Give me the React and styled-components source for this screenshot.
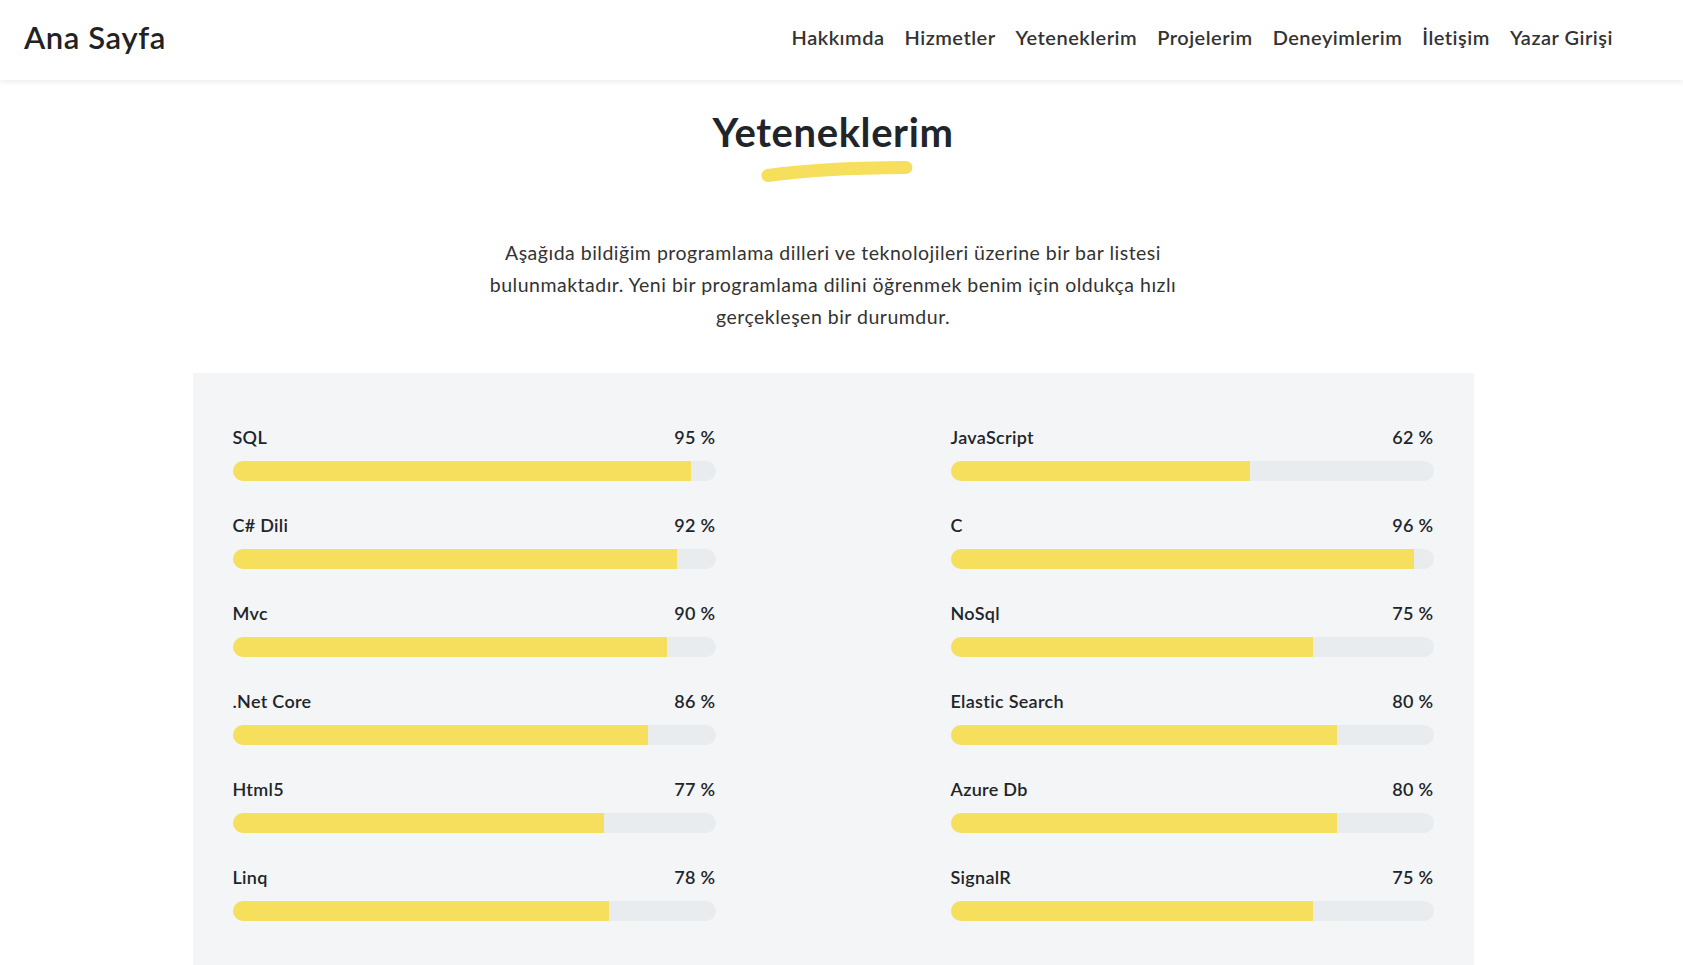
import React from "react";
import styled, { createGlobalStyle } from "styled-components";

const GlobalStyle = createGlobalStyle`
  html, body { margin: 0; padding: 0; background: #ffffff; }
  body {
    font-family: Lato, "Noto Sans", sans-serif;
    color: #212529;
    overflow: hidden;
  }
  * { box-sizing: border-box; }
`;

const Header = styled.header`
  height: 80px;
  display: flex;
  align-items: center;
  justify-content: space-between;
  padding: 0 70px 6px 24px;
  background: #fff;
  box-shadow: 0 2px 6px rgba(0, 0, 0, 0.08);
  position: relative;
  z-index: 1;
`;

const Brand = styled.a`
  font-size: 31px;
  font-weight: 600;
  color: #222;
  text-decoration: none;
  letter-spacing: 0.6px;
`;

const Nav = styled.nav`
  display: flex;
  gap: 20px;
`;

const NavLink = styled.a`
  font-size: 20px;
  font-weight: 600;
  color: #333;
  text-decoration: none;
  letter-spacing: 0.5px;
`;

const Main = styled.main`
  padding-right: 17px;
`;

const Section = styled.section`
  display: flex;
  flex-direction: column;
  align-items: center;
  padding-top: 28px;
`;

const Title = styled.h2`
  margin: 0;
  font-size: 40px;
  line-height: 48px;
  font-weight: 700;
  color: #212529;
  letter-spacing: 0.6px;
`;

const Swash = styled.svg`
  display: block;
  margin-top: 5px;
  margin-left: 8px;
`;

const Intro = styled.p`
  margin: 54px 0 0;
  font-size: 19.5px;
  line-height: 32px;
  color: #333;
  text-align: center;
  letter-spacing: 0.5px;
`;

const Panel = styled.div`
  margin-top: 40px;
  width: 1281px;
  background: #f4f5f7;
  padding: 52px 40px 60px;
  display: grid;
  grid-template-columns: 483px 483px;
  justify-content: space-between;
  row-gap: 32px;
`;

const Skill = styled.div`
  display: flex;
  flex-direction: column;
`;

const LabelRow = styled.div`
  display: flex;
  justify-content: space-between;
  font-size: 18px;
  line-height: 24px;
  font-weight: 600;
  color: #212529;
  letter-spacing: 0.3px;
  margin-bottom: 12px;
`;

const Track = styled.div`
  height: 20px;
  border-radius: 10px;
  background: #e9ecef;
  overflow: hidden;
`;

const Fill = styled.div`
  height: 100%;
  background: #f7df5e;
`;

const skills = [
  ["SQL", 95],
  ["JavaScript", 62],
  ["C# Dili", 92],
  ["C", 96],
  ["Mvc", 90],
  ["NoSql", 75],
  [".Net Core", 86],
  ["Elastic Search", 80],
  ["Html5", 77],
  ["Azure Db", 80],
  ["Linq", 78],
  ["SignalR", 75],
];

const navItems = [
  "Hakkımda",
  "Hizmetler",
  "Yeteneklerim",
  "Projelerim",
  "Deneyimlerim",
  "İletişim",
  "Yazar Girişi",
];

export default function App() {
  return (
    <>
      <GlobalStyle />
      <Header>
        <Brand href="#">Ana Sayfa</Brand>
        <Nav>
          {navItems.map((n) => (
            <NavLink key={n} href="#">
              {n}
            </NavLink>
          ))}
        </Nav>
      </Header>
      <Main>
        <Section>
          <Title>Yeteneklerim</Title>
          <Swash width="154" height="22" viewBox="0 0 154 22">
            <path
              d="M8 14.5 Q 60 7 146 6.5"
              stroke="#f7df5e"
              strokeWidth="13"
              strokeLinecap="round"
              fill="none"
            />
          </Swash>
          <Intro>
            Aşağıda bildiğim programlama dilleri ve teknolojileri üzerine bir bar listesi
            <br />
            bulunmaktadır. Yeni bir programlama dilini öğrenmek benim için oldukça hızlı
            <br />
            gerçekleşen bir durumdur.
          </Intro>
          <Panel>
            {skills.map(([name, pct]) => (
              <Skill key={name}>
                <LabelRow>
                  <span>{name}</span>
                  <span>{pct} %</span>
                </LabelRow>
                <Track>
                  <Fill style={{ width: `${pct}%` }} />
                </Track>
              </Skill>
            ))}
          </Panel>
        </Section>
      </Main>
    </>
  );
}
